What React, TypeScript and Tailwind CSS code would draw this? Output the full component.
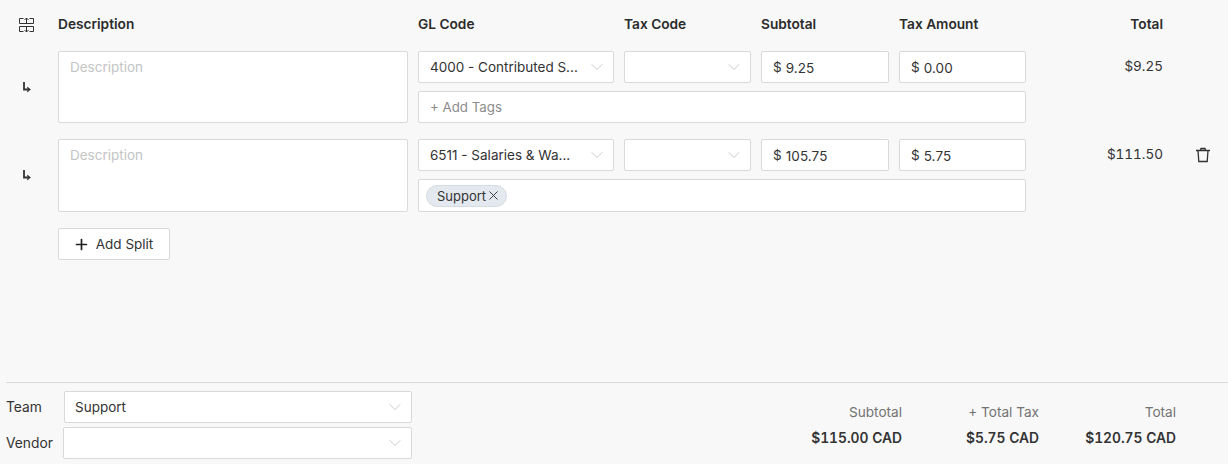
import { ChevronDown, Plus, X } from 'lucide-react';

const field = 'h-8 rounded-[2px] border border-[#d9d9d9] bg-white';

function SplitIcon() {
  return (
    <svg width="16" height="16" viewBox="0 0 16 16" fill="none" stroke="#333" strokeWidth="1">
      <path d="M4.500 1.500H.5v5h14v-5h-4M.5 9.500h14v5h-4M4.500 14.500H.5v-5" />
      <path d="M7.500 6V1M5.500 3 7.500 1 9.500 3M7.500 10v5M5.500 13 7.500 15 9.500 13" />
    </svg>
  );
}

function ReturnArrow() {
  return (
    <svg width="8" height="11" viewBox="0 0 8 11" fill="none" stroke="#333">
      <path d="M1 0v7.500h3.500" strokeWidth="1.800" />
      <path d="M4.500 5 7.500 7.500 4.500 10z" fill="#333" strokeWidth=".5" />
    </svg>
  );
}

function TrashIcon() {
  return (
    <svg width="16" height="16" viewBox="0 0 16 16" fill="none" stroke="#333" strokeWidth="1.300">
      <path d="M1 3.500h14M5.500 3.500 6 1.500h4l.5 2M3 3.500l.8 11h8.400l.8-11" />
    </svg>
  );
}

function Select({ value, className }: { value?: string; className?: string }) {
  return (
    <div className={`${field} flex items-center justify-between pr-[6px] pl-[11px] ${className ?? ''}`}>
      <span className="text-[13.500px] whitespace-nowrap text-[#333]">{value}</span>
      <ChevronDown className="h-5 w-5 shrink-0 text-[#bfbfbf]" strokeWidth={1} />
    </div>
  );
}

function Money({ value }: { value: string }) {
  return (
    <div className={`${field} flex items-center gap-1 px-[11px] text-[13.500px] text-[#333]`}>
      <span>$</span>
      <span className="pt-[2px] tracking-[0.1px]">{value}</span>
    </div>
  );
}

function SplitRow({
  gl,
  subtotal,
  tax,
  total,
  tag,
  canDelete,
}: {
  gl: string;
  subtotal: string;
  tax: string;
  total: string;
  tag?: string;
  canDelete?: boolean;
}) {
  return (
    <div className="flex">
      <div className="flex w-[58px] items-center pl-[23px]">
        <ReturnArrow />
      </div>
      <textarea
        readOnly
        placeholder="Description"
        className="block w-[350px] resize-none rounded-[2px] border border-[#d9d9d9] bg-white px-[11px] py-[5px] text-[13.500px] placeholder:text-[#c4c4c4]"
      />
      <div className="ml-[10px] grid w-[608px] grid-cols-[196px_127px_128px_127px] gap-x-[10px] gap-y-2">
        <Select value={gl} />
        <Select />
        <Money value={subtotal} />
        <Money value={tax} />
        {tag ? (
          <div className={`${field} col-span-4 flex h-[33px] items-center px-[7px]`}>
            <span className="flex h-[22px] items-center rounded-full border border-[#d5dde3] bg-[#e3e9ee] pr-[5px] pl-[10px] text-[13px] text-[#333]">
              <span className="pt-[3px]">{tag}</span>
              <X className="h-[15px] w-[15px]" strokeWidth={1.500} />
            </span>
          </div>
        ) : (
          <div className={`${field} col-span-4 flex items-center px-[11px] pt-[2px] text-[13.300px] text-[#8c8c8c]`}>
            + Add Tags
          </div>
        )}
      </div>
      <div className="w-[137px] pt-[5px] text-right text-[13.500px] leading-5 text-[#333] tabular-nums">{total}</div>
      <div className="pt-2 pl-8">{canDelete && <TrashIcon />}</div>
    </div>
  );
}

function Summary({ label, value, className }: { label: string; value: string; className: string }) {
  return (
    <div className={`text-right ${className}`}>
      <div className="text-[13.600px] leading-5 text-[#737373]">{label}</div>
      <div className="mt-1.5 text-[13.800px] leading-5 font-semibold text-[#333] tabular-nums">{value}</div>
    </div>
  );
}

export default function App() {
  return (
    <div className="flex h-[464px] w-[1228px] flex-col overflow-hidden bg-[#f8f8f8] font-['Inter',sans-serif]">
      <div className="flex-1">
        {/* Table header */}
        <div className="flex h-[51px] items-center pb-[3px] text-[13.700px] font-semibold text-[#2b2b2b]">
          <div className="w-[58px] pt-[2px] pl-[19px]">
            <SplitIcon />
          </div>
          <div className="w-[360px]">Description</div>
          <div className="w-[206px]">GL Code</div>
          <div className="w-[137px]">Tax Code</div>
          <div className="w-[138px]">Subtotal</div>
          <div className="w-[127px]">Tax Amount</div>
          <div className="w-[137px] text-right">Total</div>
        </div>

        {/* Splits */}
        <div className="flex flex-col gap-4">
          <SplitRow gl="4000 - Contributed S..." subtotal="9.25" tax="0.00" total="$9.25" />
          <SplitRow gl="6511 - Salaries & Wa..." subtotal="105.75" tax="5.75" total="$111.50" tag="Support" canDelete />
        </div>

        <div className="mt-4 ml-[58px]">
          <button className={`${field} flex w-28 items-center justify-center gap-[6px] pr-[2px] text-[13.500px] text-[#333]`}>
            <Plus className="h-[17px] w-[17px] text-[#222]" strokeWidth={2.400} />
            Add Split
          </button>
        </div>
      </div>

      {/* Footer */}
      <div className="ml-1.5 flex h-[82px] justify-between border-t border-[#d9d9d9] pr-[52px]">
        <div className="mt-2 flex w-[406px] flex-col gap-1 text-[13.800px] text-[#333]">
          <div className="flex items-center justify-between">
            Team
            <Select value="Support" className="w-[348px] pl-[10px]!" />
          </div>
          <div className="flex items-center justify-between">
            Vendor
            <Select className="w-[349px]" />
          </div>
        </div>
        <div className="mt-[19px] flex">
          <Summary label="Subtotal" value="$115.00 CAD" className="w-[100px]" />
          <Summary label="+ Total Tax" value="$5.75 CAD" className="w-[137px]" />
          <Summary label="Total" value="$120.75 CAD" className="w-[137px]" />
        </div>
      </div>
    </div>
  );
}
